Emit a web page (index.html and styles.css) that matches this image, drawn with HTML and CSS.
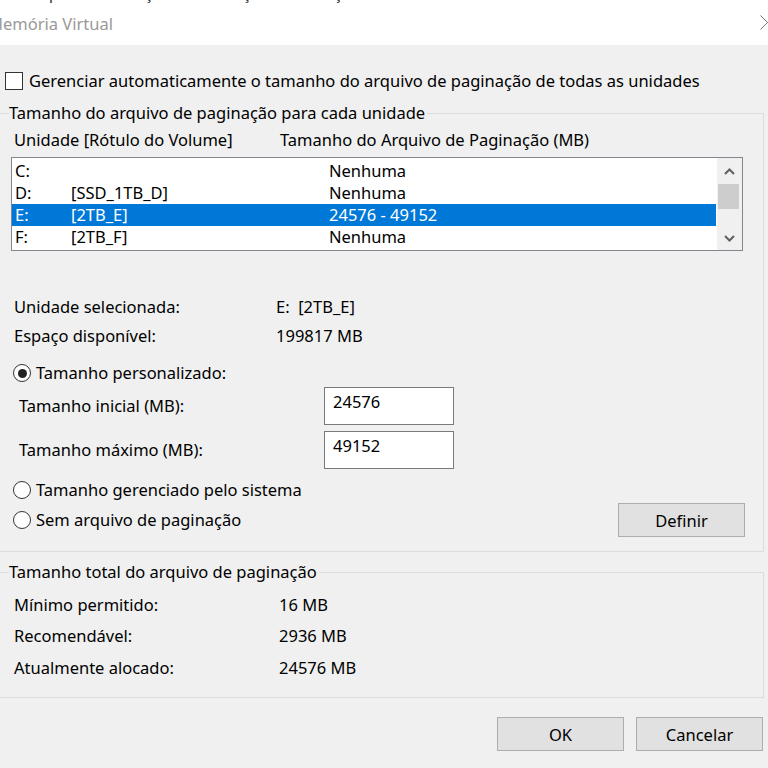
FILE: index.html
```html
<!DOCTYPE html>
<html lang="pt-BR">
<head>
    <meta charset="UTF-8">
    <meta name="viewport" content="width=device-width, initial-scale=1.0">
    <title>Memória Virtual</title>
    <link rel="stylesheet" href="styles.css">
</head>
<body>
    <div class="topstrip">
        <span>Desempenho &nbsp;&nbsp; Avançado &nbsp;&nbsp; Prevenção de Execução de Dados</span>
    </div>

    <div class="titlebar">
        <span class="title">Memória Virtual</span>
        <svg class="close" width="15" height="15" viewBox="0 0 15 15">
            <path d="M0.5 0.5 L14.5 14.5 M14.5 0.5 L0.5 14.5" stroke="#777" stroke-width="1" fill="none"/>
        </svg>
    </div>

    <div class="dialog">
        <label class="check-row">
            <span class="checkbox"></span>
            <span>Gerenciar automaticamente o tamanho do arquivo de paginação de todas as unidades</span>
        </label>

        <fieldset class="group group-drives">
            <legend>Tamanho do arquivo de paginação para cada unidade</legend>

            <div class="list-head">
                <span>Unidade [Rótulo do Volume]</span>
                <span>Tamanho do Arquivo de Paginação (MB)</span>
            </div>

            <div class="listbox">
                <div class="rows">
                    <div class="row"><span>C:</span><span></span><span>Nenhuma</span></div>
                    <div class="row"><span>D:</span><span>[SSD_1TB_D]</span><span>Nenhuma</span></div>
                    <div class="row selected"><span>E:</span><span>[2TB_E]</span><span>24576 - 49152</span></div>
                    <div class="row"><span>F:</span><span>[2TB_F]</span><span>Nenhuma</span></div>
                </div>
                <div class="scrollbar">
                    <div class="arrow arrow-up">
                        <svg width="11" height="7" viewBox="0 0 11 7"><path d="M1 6 L5.5 1.5 L10 6" stroke="#606060" stroke-width="2" fill="none"/></svg>
                    </div>
                    <div class="thumb"></div>
                    <div class="track"></div>
                    <div class="arrow arrow-down">
                        <svg width="11" height="7" viewBox="0 0 11 7"><path d="M1 1 L5.5 5.5 L10 1" stroke="#606060" stroke-width="2" fill="none"/></svg>
                    </div>
                </div>
            </div>

            <div class="info first">
                <span>Unidade selecionada:</span>
                <span>E:&nbsp; [2TB_E]</span>
            </div>
            <div class="info">
                <span>Espaço disponível:</span>
                <span>199817 MB</span>
            </div>

            <label class="radio-row custom">
                <span class="radio checked"></span>
                <span>Tamanho personalizado:</span>
            </label>

            <div class="size-row first">
                <span>Tamanho inicial (MB):</span>
                <div class="textbox">24576</div>
            </div>
            <div class="size-row">
                <span>Tamanho máximo (MB):</span>
                <div class="textbox">49152</div>
            </div>

            <label class="radio-row system">
                <span class="radio"></span>
                <span>Tamanho gerenciado pelo sistema</span>
            </label>

            <div class="last-row">
                <label class="radio-row">
                    <span class="radio"></span>
                    <span>Sem arquivo de paginação</span>
                </label>
                <button class="btn btn-set">Definir</button>
            </div>
        </fieldset>

        <fieldset class="group group-total">
            <legend>Tamanho total do arquivo de paginação</legend>
            <div class="total first">
                <span>Mínimo permitido:</span>
                <span>16 MB</span>
            </div>
            <div class="total">
                <span>Recomendável:</span>
                <span>2936 MB</span>
            </div>
            <div class="total last">
                <span>Atualmente alocado:</span>
                <span>24576 MB</span>
            </div>
        </fieldset>

        <div class="buttons">
            <button class="btn">OK</button>
            <button class="btn">Cancelar</button>
        </div>
    </div>
</body>
</html>
```

FILE: styles.css
```css
* {
    box-sizing: border-box;
}

html {
    overflow: hidden;
}

body {
    margin: 0;
    width: 768px;
    height: 768px;
    overflow: hidden;
    background-color: #f0f0f0;
    color: #000;
    font-family: "Noto Sans", "Open Sans", sans-serif;
    font-size: 16.5px;
    line-height: 20px;
}

/* janela de trás, quase toda escondida */
.topstrip {
    height: 3px;
    overflow: hidden;
    background-color: #fff;
    white-space: nowrap;
}

.topstrip span {
    display: block;
    margin-top: -15px;
    line-height: 16px;
    font-size: 15px;
    color: #222;
}

.titlebar {
    height: 42px;
    background-color: #fff;
    display: flex;
    align-items: center;
    justify-content: space-between;
}

.title {
    margin-left: -12px;
    color: #999;
}

.close {
    margin-right: -7px;
    margin-top: -3px;
}

.dialog {
    display: flex;
    flex-direction: column;
}

.check-row {
    display: flex;
    align-items: center;
    gap: 6px;
    margin: 27px 0 0 5px;
    height: 18px;
}

.checkbox {
    width: 18px;
    height: 18px;
    border: 1px solid #333;
    background-color: #fff;
}

/* group boxes */
.group {
    margin: 13px 4px 0 -1px;
    padding: 0 20px 0 9px;
    border: 1px solid #dcdcdc;
    min-width: 0;
}

.group legend {
    padding: 0 2px 0 0;
    line-height: 20px;
}

.list-head {
    display: grid;
    grid-template-columns: 266px 1fr;
    padding-left: 5px;
    margin-top: 7px;
}

.listbox {
    display: flex;
    margin: 7px 0 0 2px;
    height: 94px;
    border: 1px solid #828790;
    background-color: #fff;
}

.rows {
    flex: 1;
    padding: 2px 1px 0 0;
}

.row {
    display: grid;
    grid-template-columns: 56px 258px 1fr;
    height: 22px;
    line-height: 22px;
    padding-left: 3px;
}

.row.selected {
    background-color: #0078d7;
    color: #fff;
}

.scrollbar {
    width: 25px;
    background-color: #f0f0f0;
    display: flex;
    flex-direction: column;
}

.arrow {
    height: 26px;
    display: flex;
    align-items: center;
    justify-content: center;
}

.arrow-down {
    height: 23px;
}

.thumb {
    height: 25px;
    margin: 0 3px 0 1px;
    background-color: #cdcdcd;
}

.track {
    flex: 1;
}

.info {
    display: grid;
    grid-template-columns: 262px 1fr;
    padding-left: 5px;
    margin-top: 9px;
}

.info.first {
    margin-top: 46px;
}

.radio-row {
    display: flex;
    align-items: center;
    gap: 5px;
    margin-left: 4px;
}

.radio-row.custom {
    margin-top: 17px;
}

.radio-row.system {
    margin-top: 11px;
}

.radio {
    width: 18px;
    height: 18px;
    border: 1px solid #333;
    border-radius: 50%;
    background-color: #fff;
    display: flex;
    align-items: center;
    justify-content: center;
}

.radio.checked::after {
    content: "";
    width: 9px;
    height: 9px;
    border-radius: 50%;
    background-color: #222;
}

.size-row {
    display: grid;
    grid-template-columns: 305px 130px;
    align-items: center;
    padding-left: 10px;
    margin-top: 6px;
}

.size-row.first {
    margin-top: 4px;
}

.textbox {
    height: 38px;
    padding: 4px 8px;
    border: 1px solid #7a7a7a;
    background-color: #fff;
}

.last-row {
    display: flex;
    align-items: center;
    justify-content: space-between;
    margin: 3px -2px 14px 0;
}

.btn {
    width: 127px;
    height: 34px;
    padding: 0;
    border: 1px solid #adadad;
    background-color: #e1e1e1;
    font-family: inherit;
    font-size: 16.5px;
    color: #000;
}

.group-total {
    margin-top: 10px;
    padding-bottom: 19px;
}

.total {
    display: grid;
    grid-template-columns: 265px 1fr;
    padding-left: 5px;
    margin-top: 11px;
}

.total.first {
    margin-top: 13px;
}

.total.last {
    margin-top: 12px;
}

.buttons {
    display: flex;
    justify-content: flex-end;
    gap: 12px;
    margin: 19px 5px 0 0;
}
```
